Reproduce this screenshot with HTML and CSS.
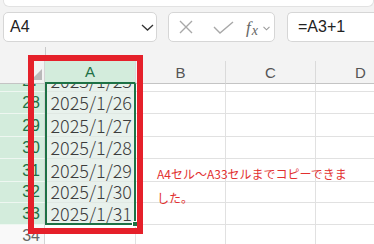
FILE: index.html
```html
<!DOCTYPE html>
<html lang="ja">
<head>
<meta charset="utf-8">
<title>Excel</title>
<link rel="stylesheet" href="styles.css">
</head>
<body>
<div class="app">
  <div class="ribbon"></div>
  <div class="fbar">
    <div class="namebox">
      <span class="name">A4</span>
      <svg class="nb-chev" width="13" height="7" viewBox="0 0 13 7"><path d="M1 1L6.5 6L12 1" fill="none" stroke="#333" stroke-width="1.3"/></svg>
    </div>
    <div class="tools">
      <svg class="ico-x" width="14" height="14" viewBox="0 0 14 14"><path d="M1 1L13 13M13 1L1 13" fill="none" stroke="#a8a8a8" stroke-width="1.4"/></svg>
      <svg class="ico-ok" width="21" height="13" viewBox="0 0 21 13"><path d="M1 6L7 12L20 1" fill="none" stroke="#a8a8a8" stroke-width="1.4"/></svg>
      <span class="fx"><i>f</i><i class="fx-x">x</i></span>
      <svg class="fx-chev" width="7" height="5" viewBox="0 0 7 5"><path d="M0.5 0.8L3.5 3.8L6.5 0.8" fill="none" stroke="#9a9a9a" stroke-width="1.1"/></svg>
    </div>
    <div class="formula">=A3+1</div>
  </div>
  <div class="split"></div>
  <div class="sheet">
    <div class="corner"><span class="tri"></span></div>
    <div class="ch hl">A</div><div class="ch">B</div><div class="ch">C</div><div class="ch">D</div>

    <div class="rh hl">27</div><div class="c hl">2025/1/25</div><div class="c"></div><div class="c"></div><div class="c"></div>
    <div class="rh hl">28</div><div class="c hl">2025/1/26</div><div class="c"></div><div class="c"></div><div class="c"></div>
    <div class="rh hl">29</div><div class="c hl">2025/1/27</div><div class="c"></div><div class="c"></div><div class="c"></div>
    <div class="rh hl">30</div><div class="c hl">2025/1/28</div><div class="c"></div><div class="c"></div><div class="c"></div>
    <div class="rh hl">31</div><div class="c hl">2025/1/29</div><div class="c"></div><div class="c"></div><div class="c"></div>
    <div class="rh hl">32</div><div class="c hl">2025/1/30</div><div class="c"></div><div class="c"></div><div class="c"></div>
    <div class="rh hl">33</div><div class="c hl">2025/1/31</div><div class="c"></div><div class="c"></div><div class="c"></div>
    <div class="rh">34</div><div class="c"></div><div class="c"></div><div class="c"></div><div class="c"></div>

    <div class="selection"><span class="handle"></span></div>
  </div>
  <div class="callout"></div>
  <p class="note">A4セル～A33セルまでコピーできました。</p>
</div>
</body>
</html>
```

FILE: styles.css
```css
* { box-sizing: border-box; }
html, body { margin: 0; padding: 0; }
body {
  width: 374px;
  height: 244px;
  overflow: hidden;
  background: #f3f3f3;
  font-family: "Liberation Sans", Arial, sans-serif;
}
.app {
  position: relative;
  width: 374px;
  height: 244px;
  overflow: hidden;
}
.ribbon {
  height: 7px;
  margin-left: 3px;
  background: #fff;
  border: 1px solid #e2e2e2;
  border-top: none;
  border-radius: 0 0 6px 6px;
}
.fbar {
  display: flex;
  gap: 11px;
  height: 30px;
  margin: 5px 0 0 3px;
}
.namebox, .tools, .formula {
  background: #fff;
  border: 1px solid #d6d6d6;
  border-radius: 5px;
  display: flex;
  align-items: center;
}
.namebox {
  flex: 0 0 154px;
  padding: 0 2px 0 6px;
  justify-content: space-between;
}
.name {
  font-size: 16px;
  color: #222;
}
.tools {
  flex: 0 0 107px;
  padding-left: 10px;
}
.ico-x { margin-right: 20px; }
.ico-ok { margin-right: 12px; margin-top: 1px; }
.fx {
  font-family: "Liberation Serif", "Times New Roman", serif;
  font-size: 17px;
  color: #666;
  line-height: 1;
  margin-right: 5px;
}
.fx i { font-style: italic; }
.fx-x {
  font-size: 14px;
  position: relative;
  top: 2px;
  margin-left: 1px;
}
.fx-chev { margin-top: 2px; }
.formula {
  flex: 1 0 120px;
  margin-left: 1px;
  padding-left: 10px;
  font-size: 16px;
  color: #222;
  border-right: none;
  border-radius: 5px 0 0 5px;
}
.split {
  height: 14px;
  margin: 5px 0 0 45px;
  border-left: 1px solid #c9c9c9;
}
.sheet {
  position: relative;
  display: grid;
  grid-template-columns: 45px 91px 90px 90px 90px;
  grid-template-rows: 23px 8px 22px 23px 22px 23px 21px 22px 22px;
  width: 406px;
  background: #fff;
}
.corner {
  position: relative;
  background: #f3f3f3;
  border-right: 1px solid #d4d4d4;
  border-bottom: 1px solid #c4c4c4;
}
.tri {
  position: absolute;
  right: 2px;
  bottom: 3px;
  width: 0;
  height: 0;
  border-left: 11px solid transparent;
  border-bottom: 11px solid #b9b9b9;
}
.ch {
  background: #f3f3f3;
  border-right: 1px solid #dadada;
  border-bottom: 1px solid #c4c4c4;
  display: flex;
  align-items: center;
  justify-content: center;
  font-size: 15px;
  color: #555;
}
.ch.hl {
  background: #d3ecdc;
  color: #1e7145;
  border-bottom: 2px solid #1e7145;
}
.rh {
  display: flex;
  align-items: flex-end;
  justify-content: flex-end;
  overflow: hidden;
  padding: 0 4px 0 0;
  font-size: 16px;
  line-height: 20px;
  color: #666;
  background: #f9f9f9;
  border-right: 1px solid #d4d4d4;
  border-bottom: 1px solid #e1e1e1;
}
.rh.hl {
  background: #d3ecdc;
  color: #1e7145;
  border-bottom-color: #eef7f1;
}
.c {
  display: flex;
  align-items: flex-end;
  justify-content: flex-end;
  overflow: hidden;
  padding: 0 3px 1px 0;
  font-family: "Noto Sans CJK JP", sans-serif;
  font-weight: 300;
  font-size: 18px;
  line-height: 20px;
  color: #3c3c3c;
  border-right: 1px solid #e1e1e1;
  border-bottom: 1px solid #e1e1e1;
  white-space: nowrap;
}
.c.hl {
  background: #e8f1ec;
  border-bottom-color: #e0e8e3;
}
.selection {
  position: absolute;
  left: 45px;
  top: 23px;
  width: 91px;
  height: 141px;
  border: 2px solid #1e7145;
  border-top: none;
  pointer-events: none;
}
.handle {
  position: absolute;
  right: -4px;
  bottom: -4px;
  width: 6px;
  height: 6px;
  background: #1e7145;
  border: 1px solid #fff;
}
.callout {
  position: absolute;
  left: 28px;
  top: 55px;
  width: 115px;
  height: 179px;
  border: 6px solid #e5202a;
}
.note {
  position: absolute;
  left: 157px;
  top: 162px;
  width: 192px;
  margin: 0;
  font-family: "Noto Sans CJK JP", sans-serif;
  font-size: 12px;
  line-height: 24px;
  color: #e2302f;
}
```
